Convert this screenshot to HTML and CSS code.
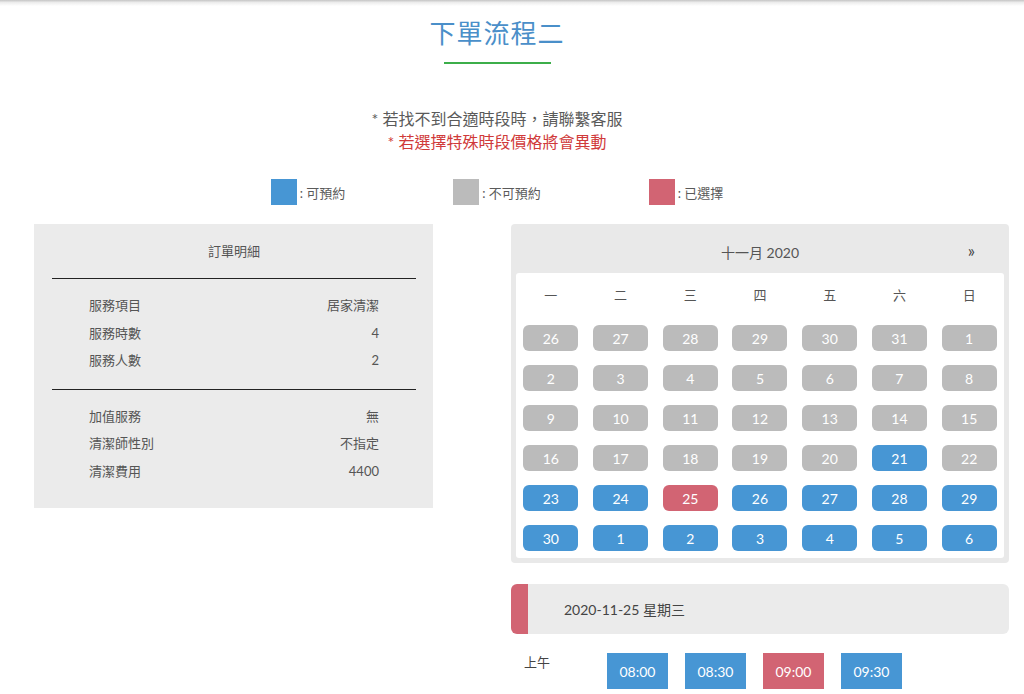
FILE: index.html
```html
<!DOCTYPE html>
<html lang="zh-Hant">
<head>
<meta charset="utf-8">
<link rel="stylesheet" href="styles.css">
</head>
<body>
<div class="topshade"></div>
<div class="page">
  <h1 class="title">下單流程二</h1>
  <div class="title-line"></div>
  <div class="notes">
    <p class="note">* 若找不到合適時段時，請聯繫客服</p>
    <p class="note warn">* 若選擇特殊時段價格將會異動</p>
  </div>
  <div class="legend">
    <div class="legend-item"><span class="swatch blue"></span><span>: 可預約</span></div>
    <div class="legend-item"><span class="swatch gray"></span><span>: 不可預約</span></div>
    <div class="legend-item"><span class="swatch red"></span><span>: 已選擇</span></div>
  </div>
  <div class="columns">
    <div class="order">
      <div class="order-title">訂單明細</div>
      <div class="order-group">
        <div class="row"><span>服務項目</span><span>居家清潔</span></div>
        <div class="row"><span>服務時數</span><span>4</span></div>
        <div class="row"><span>服務人數</span><span>2</span></div>
      </div>
      <div class="order-group">
        <div class="row"><span>加值服務</span><span>無</span></div>
        <div class="row"><span>清潔師性別</span><span>不指定</span></div>
        <div class="row"><span>清潔費用</span><span>4400</span></div>
      </div>
    </div>
    <div class="right">
      <div class="calendar">
        <div class="cal-head"><span class="cal-month">十一月 2020</span><span class="cal-next">»</span></div>
        <div class="cal-body">
          <div class="cal-grid">
            <div class="dow">一</div><div class="dow">二</div><div class="dow">三</div><div class="dow">四</div><div class="dow">五</div><div class="dow">六</div><div class="dow">日</div>
            <div class="cell"><span class="day off">26</span></div><div class="cell"><span class="day off">27</span></div><div class="cell"><span class="day off">28</span></div><div class="cell"><span class="day off">29</span></div><div class="cell"><span class="day off">30</span></div><div class="cell"><span class="day off">31</span></div><div class="cell"><span class="day off">1</span></div>
            <div class="cell"><span class="day off">2</span></div><div class="cell"><span class="day off">3</span></div><div class="cell"><span class="day off">4</span></div><div class="cell"><span class="day off">5</span></div><div class="cell"><span class="day off">6</span></div><div class="cell"><span class="day off">7</span></div><div class="cell"><span class="day off">8</span></div>
            <div class="cell"><span class="day off">9</span></div><div class="cell"><span class="day off">10</span></div><div class="cell"><span class="day off">11</span></div><div class="cell"><span class="day off">12</span></div><div class="cell"><span class="day off">13</span></div><div class="cell"><span class="day off">14</span></div><div class="cell"><span class="day off">15</span></div>
            <div class="cell"><span class="day off">16</span></div><div class="cell"><span class="day off">17</span></div><div class="cell"><span class="day off">18</span></div><div class="cell"><span class="day off">19</span></div><div class="cell"><span class="day off">20</span></div><div class="cell"><span class="day on">21</span></div><div class="cell"><span class="day off">22</span></div>
            <div class="cell"><span class="day on">23</span></div><div class="cell"><span class="day on">24</span></div><div class="cell"><span class="day sel">25</span></div><div class="cell"><span class="day on">26</span></div><div class="cell"><span class="day on">27</span></div><div class="cell"><span class="day on">28</span></div><div class="cell"><span class="day on">29</span></div>
            <div class="cell"><span class="day on">30</span></div><div class="cell"><span class="day on">1</span></div><div class="cell"><span class="day on">2</span></div><div class="cell"><span class="day on">3</span></div><div class="cell"><span class="day on">4</span></div><div class="cell"><span class="day on">5</span></div><div class="cell"><span class="day on">6</span></div>
          </div>
        </div>
      </div>
      <div class="datebar"><span class="date-text">2020-11-25 星期三</span></div>
      <div class="times">
        <span class="period">上午</span>
        <div class="slots">
          <span class="slot">08:00</span>
          <span class="slot">08:30</span>
          <span class="slot chosen">09:00</span>
          <span class="slot">09:30</span>
        </div>
      </div>
    </div>
  </div>
</div>
</body>
</html>
```

FILE: styles.css
```css
* { box-sizing: border-box; }
html, body { margin: 0; padding: 0; background: #fff; }
body {
  font-family: Lato, "Noto Sans CJK TC", sans-serif;
  color: #555;
  font-size: 13px;
}
.topshade {
  height: 6px;
  background: linear-gradient(#c4c4c4, #ececec 40%, #fff);
}
.page {
  width: 994px;
}
.title {
  margin: 10px 0 0;
  text-align: center;
  font-size: 26px;
  font-weight: 400;
  line-height: 34px;
  color: #4a8fc9;
  letter-spacing: 1px;
}
.title-line {
  width: 107px;
  height: 2px;
  margin: 12px auto 0;
  background: #3cae4a;
}
.notes {
  margin-top: 43px;
  text-align: center;
}
.note {
  margin: 0;
  font-size: 16px;
  line-height: 23px;
  color: #5a5a5a;
}
.note.warn { color: #d03a3a; }
.legend {
  display: grid;
  grid-template-columns: repeat(3, 189px);
  justify-content: center;
  margin-top: 26px;
}
.legend-item {
  display: flex;
  align-items: center;
  justify-content: center;
  gap: 3px;
  font-size: 13px;
  color: #5a5a5a;
}
.swatch {
  width: 26px;
  height: 26px;
  display: block;
  flex-shrink: 0;
}
.swatch.blue { background: #4796d4; }
.swatch.gray { background: #bbbbbb; }
.swatch.red { background: #d26473; }
.columns {
  display: flex;
  align-items: flex-start;
  margin-top: 19px;
  padding-left: 34px;
}
.order {
  flex: 0 0 399px;
  width: 399px;
  height: 284px;
  background: #ebebeb;
  padding: 0 17px 0 18px;
}
.order-title {
  text-align: center;
  height: 54px;
  line-height: 54px;
  font-size: 13px;
  color: #555;
}
.order-group {
  border-top: 1px solid #222;
  padding: 13px 37px 14px;
}
.row {
  display: flex;
  justify-content: space-between;
  height: 27.5px;
  line-height: 27.5px;
  font-size: 13px;
  color: #555;
}
.right {
  flex: 0 0 498px;
  width: 498px;
  margin-left: 78px;
}
.calendar {
  background: #e9e9e9;
  border-radius: 4px;
  padding: 0 5px 5px;
}
.cal-head {
  position: relative;
  height: 49px;
  padding-top: 6px;
  display: flex;
  align-items: center;
  justify-content: center;
  font-size: 14px;
  color: #555;
}
.cal-next {
  position: absolute;
  right: 29px;
  top: 17px;
  font-size: 17px;
  line-height: 20px;
  color: #444;
}
.cal-body {
  background: #fff;
  border-radius: 3px;
}
.cal-grid {
  display: grid;
  grid-template-columns: repeat(7, 1fr);
}
.dow {
  height: 45px;
  padding-bottom: 2px;
  display: flex;
  align-items: center;
  justify-content: center;
  font-size: 13px;
  color: #555;
}
.cell {
  height: 40px;
  display: flex;
  align-items: center;
  justify-content: center;
}
.day {
  width: 55px;
  height: 26px;
  border-radius: 6px;
  display: flex;
  align-items: center;
  justify-content: center;
  color: #fff;
  font-size: 14px;
}
.day.off { background: #bbbbbb; }
.day.on { background: #4796d4; }
.day.sel { background: #d26473; }
.datebar {
  margin-top: 21px;
  height: 50px;
  border-radius: 6px;
  background: #ebebeb;
  border-left: 17px solid #d26473;
  display: flex;
  align-items: center;
  padding-left: 36px;
  font-size: 14px;
  color: #444;
}
.times {
  display: flex;
  align-items: flex-start;
  margin-top: 19px;
  padding-left: 13px;
}
.period {
  width: 83px;
  font-size: 13px;
  color: #444;
  line-height: 18px;
}
.slots {
  display: flex;
  gap: 17px;
}
.slot {
  width: 61px;
  height: 36px;
  background: #4796d4;
  color: #fff;
  display: flex;
  align-items: center;
  justify-content: center;
  font-size: 14px;
}
.slot.chosen { background: #d26473; }
```
